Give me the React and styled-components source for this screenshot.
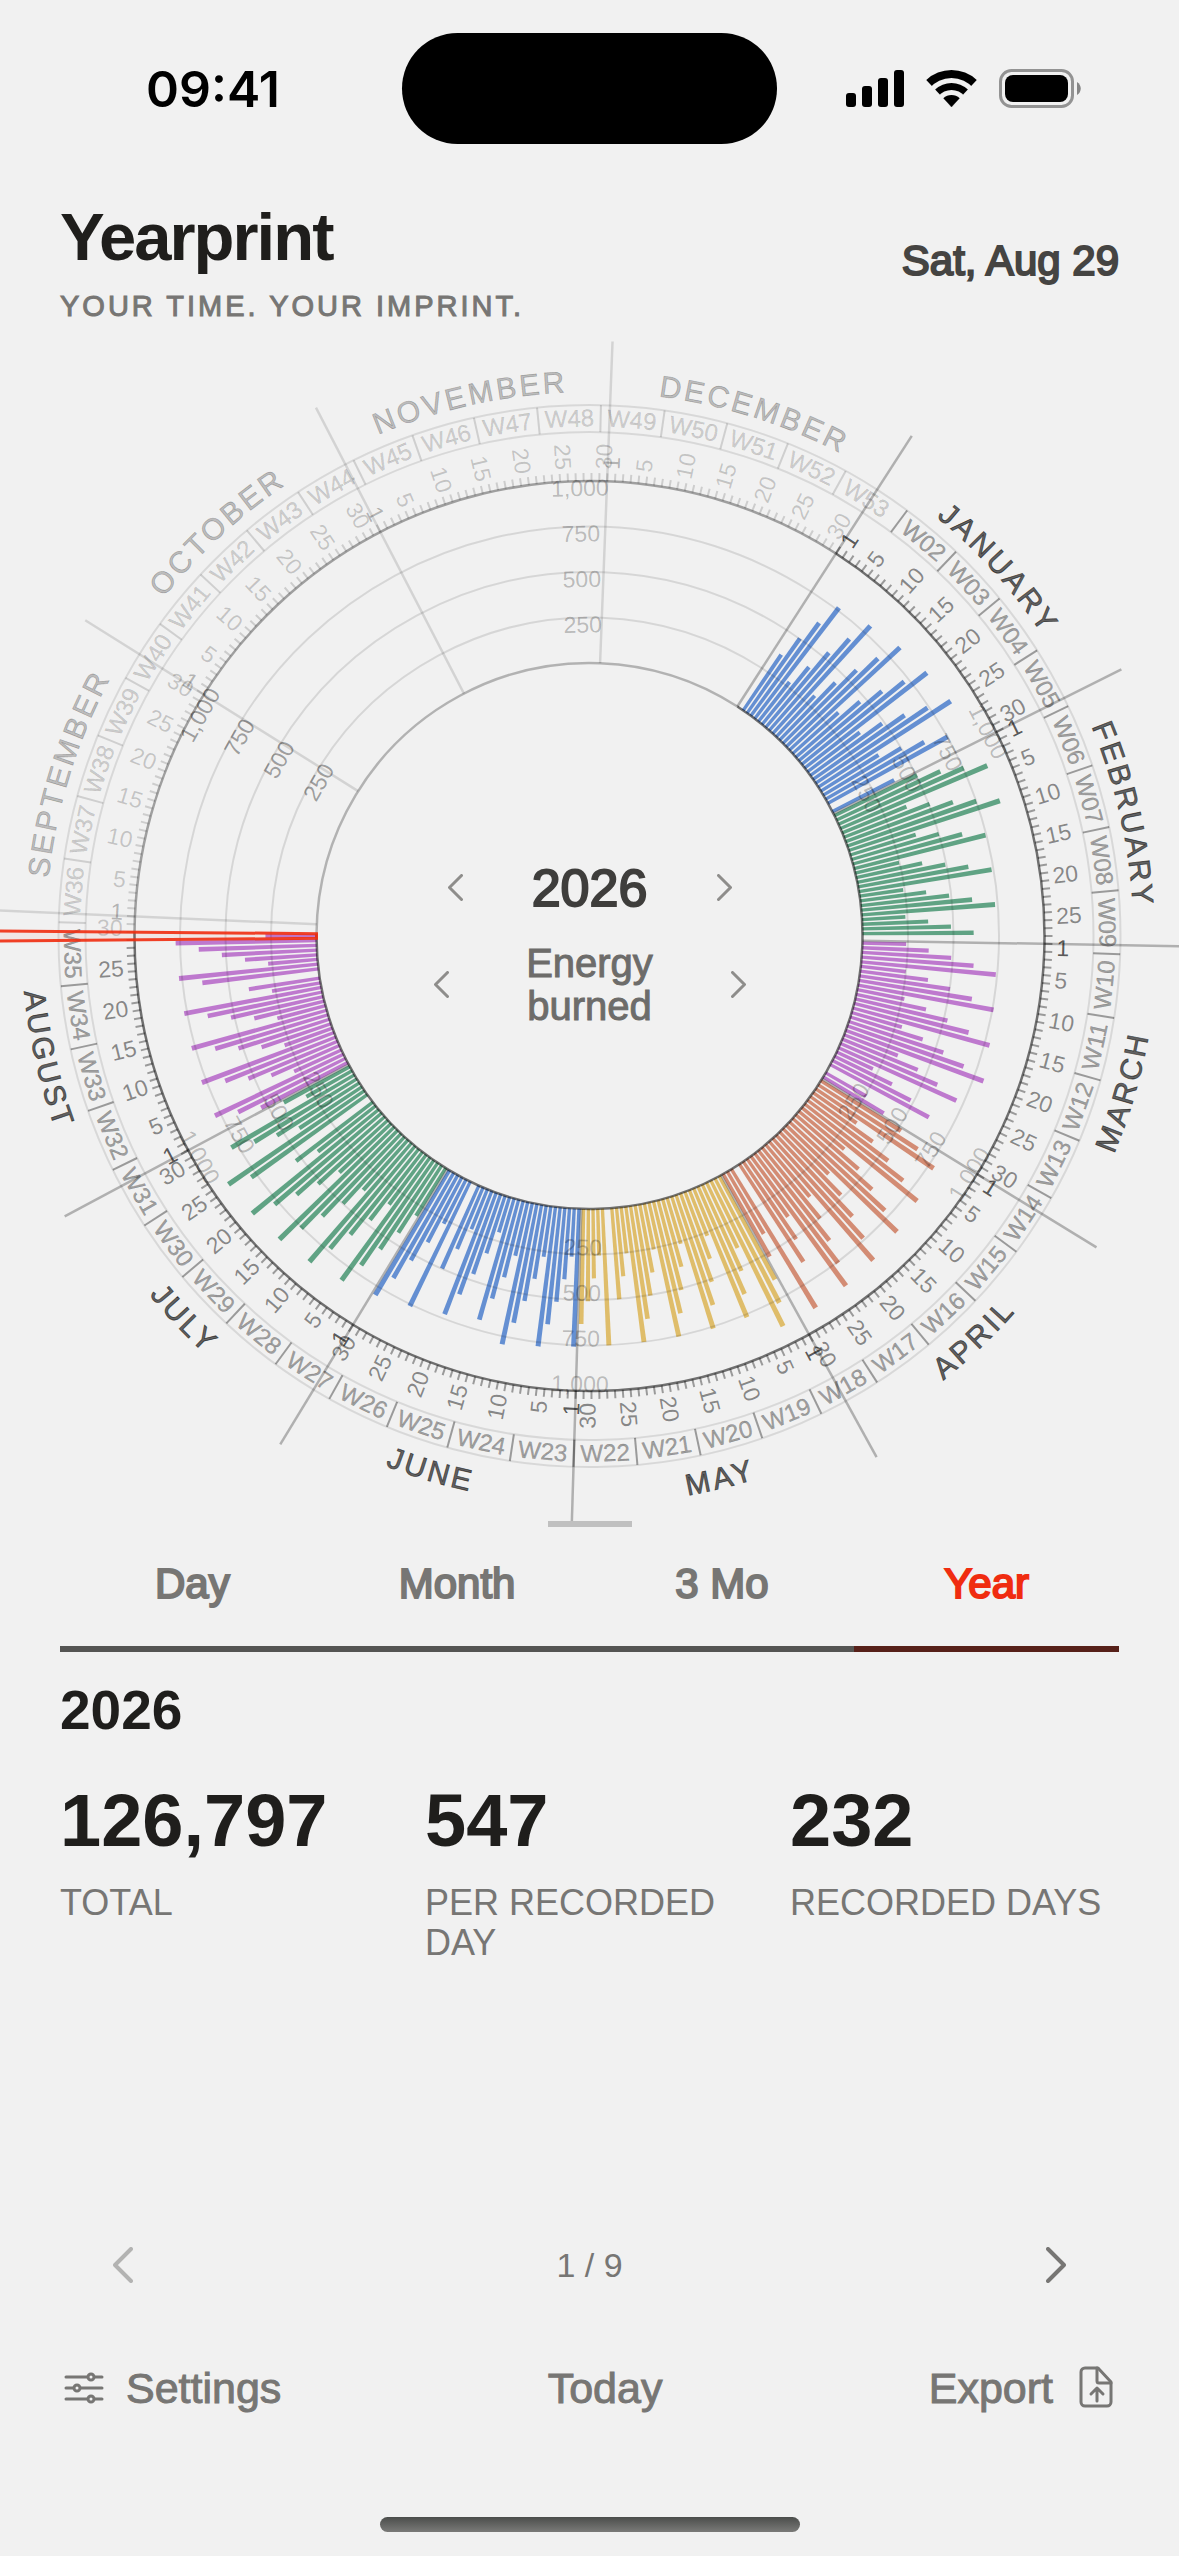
import { useState } from 'react'
import styled, { createGlobalStyle } from 'styled-components'

const colors = {
  background: '#f1f1f1',
  ink: '#1f1e1c',
  dark: '#454442',
  muted: '#777674',
  accent: '#f02c10',
}

const monthColors = ['#648fd2', '#60a384', '#be79ce', '#d38c74', '#dfbd6a']

const months = [
  { name: 'JANUARY', days: 31 },
  { name: 'FEBRUARY', days: 28 },
  { name: 'MARCH', days: 31 },
  { name: 'APRIL', days: 30 },
  { name: 'MAY', days: 31 },
  { name: 'JUNE', days: 30 },
  { name: 'JULY', days: 31 },
  { name: 'AUGUST', days: 31 },
  { name: 'SEPTEMBER', days: 30 },
  { name: 'OCTOBER', days: 31 },
  { name: 'NOVEMBER', days: 30 },
  { name: 'DECEMBER', days: 31 },
].map((month, index, all) => ({
  ...month,
  index,
  start: all.slice(0, index).reduce((sum, m) => sum + m.days, 0),
}))

const YEAR_DAYS = 365
const TODAY = 240
const FIRST_MONDAY = 4

// dial geometry
const CX = 589.5
const CY = 600
const R_INNER = 273
const R_OUTER = 455
const R_WEEK_IN = 504
const R_WEEK_OUT = 531
const R_SPOKE = 595
const STEP = 360 / YEAR_DAYS
// the dial is turned so that today points to the left
const START = 270 - (TODAY + 0.5) * STEP

const angleOf = (day) => START + day * STEP
const norm = (angle) => ((angle % 360) + 360) % 360
const isLower = (angle) => norm(angle) > 90 && norm(angle) < 270

function polar(r, angle, cx = CX, cy = CY) {
  const rad = (angle * Math.PI) / 180
  return [
    (cx + r * Math.sin(rad)).toFixed(2),
    (cy - r * Math.cos(rad)).toFixed(2),
  ]
}

function arc(r, a0, a1) {
  const sweep = a1 > a0 ? 1 : 0
  const large = Math.abs(a1 - a0) > 180 ? 1 : 0
  return `M${polar(r, a0)} A${r} ${r} 0 ${large} ${sweep} ${polar(r, a1)}`
}

function wedge(r0, r1, a0, a1, cx, cy) {
  return `M${polar(r0, a0, cx, cy)} L${polar(r1, a0, cx, cy)} A${r1} ${r1} 0 0 1 ${polar(r1, a1, cx, cy)} L${polar(r0, a1, cx, cy)} Z`
}

function ray(r0, r1, angle) {
  return `M${polar(r0, angle)} L${polar(r1, angle)}`
}

// every 29th day has no record
const records = []
for (let day = 0; day <= TODAY; day++) {
  if (day % 29 === 0) continue
  records.push({
    day,
    value: 240 + ((day * 127) % 620) + 60 * Math.sin(day / 14),
  })
}

const radiusOf = (value) => R_INNER + (value / 1000) * (R_OUTER - R_INNER)
const monthOf = (day) =>
  months.find((m) => day >= m.start && day < m.start + m.days)

const GlobalStyle = createGlobalStyle`
  * {
    box-sizing: border-box;
  }
  body {
    margin: 0;
    background: ${colors.background};
    color: ${colors.ink};
    font-family: "Liberation Sans", Arial, sans-serif;
    overflow-x: hidden;
  }
  button {
    padding: 0;
    border: 0;
    background: none;
    color: inherit;
    font: inherit;
    cursor: pointer;
  }
`

const Page = styled.div`
  display: flex;
  flex-direction: column;
  min-height: 100vh;
  overflow: hidden;
`

const StatusBar = styled.div`
  display: grid;
  grid-template-columns: 1fr auto 1fr;
  align-items: center;
  justify-items: center;
  padding-top: 33px;
  color: #000;
`
const Clock = styled.time`
  padding-left: 24px;
  font-family: Inter, sans-serif;
  font-size: 50px;
  font-weight: 600;
`
const Island = styled.div`
  width: 375px;
  height: 111px;
  border-radius: 56px;
  background: #000;
`
const StatusIcons = styled.svg`
  width: 236px;
  height: 40px;
  margin-right: 30px;
`

const Header = styled.header`
  display: flex;
  align-items: center;
  justify-content: space-between;
  margin-top: 57px;
  padding: 0 60px;
`
const Title = styled.h1`
  margin: 0 0 15px;
  font-size: 67px;
  line-height: 72px;
  letter-spacing: -2px;
`
const Tagline = styled.p`
  margin: 0;
  font-size: 29px;
  line-height: 36px;
  letter-spacing: 3px;
  color: ${colors.muted};
  -webkit-text-stroke: 1px;
`
const Today = styled.time`
  padding-bottom: 4px;
  font-size: 42px;
  line-height: 48px;
  color: ${colors.dark};
  -webkit-text-stroke: 2px;
`

const DialArea = styled.section`
  display: grid;
  margin-top: 12px;
`
const DialSvg = styled.svg`
  grid-area: 1 / 1;
  display: block;
  width: 100%;
  overflow: visible;
`
const Line = styled.path`
  fill: none;
  stroke: #000;
  stroke-width: ${({ $width }) => $width || 2};
  stroke-opacity: ${({ $alpha }) => $alpha};
`
const TodayWedge = styled.path`
  fill: ${colors.accent};
  fill-opacity: 0.05;
  stroke: ${colors.accent};
  stroke-opacity: 0.9;
  stroke-width: 3;
`
const DialText = styled.text`
  font-size: 23px;
  fill: #000;
  fill-opacity: ${({ $alpha }) => $alpha};
`
const WeekText = styled(DialText)`
  font-size: 24px;
  text-anchor: middle;
  stroke: #000;
  stroke-width: 0.4;
  stroke-opacity: ${({ $alpha }) => $alpha};
`
const MonthText = styled(DialText)`
  font-size: 30px;
  letter-spacing: 3px;
  text-anchor: middle;
  stroke: #000;
  stroke-width: 0.8;
  stroke-opacity: ${({ $alpha }) => $alpha};
`

const Controls = styled.div`
  grid-area: 1 / 1;
  place-self: center;
  z-index: 1;
  display: flex;
  flex-direction: column;
  align-items: center;
  gap: 26px;
  padding-top: 30px;
`
const Picker = styled.div`
  display: flex;
  align-items: center;
  justify-content: space-between;
  width: ${({ $wide }) => ($wide ? 312 : 284)}px;
  color: #8e8d8b;
`
const PickerYear = styled.span`
  font-size: 52px;
  line-height: 56px;
  color: #3f3e3c;
  -webkit-text-stroke: 2px;
`
const PickerMetric = styled.span`
  width: 140px;
  font-size: 40px;
  line-height: 43px;
  text-align: center;
  color: #6d6c6a;
  -webkit-text-stroke: 1px;
`

const ChevronSvg = styled.svg`
  display: block;
  fill: none;
  stroke: currentColor;
  stroke-width: 4;
  stroke-linecap: round;
  stroke-linejoin: round;
`

const Handle = styled.div`
  position: relative;
  align-self: center;
  width: 84px;
  height: 6px;
  background: #c0c0c0;
`
const Tabs = styled.div`
  position: relative;
  display: grid;
  grid-template-columns: repeat(4, 1fr);
  margin: 0 60px;
  background: ${colors.background};
`
const Tab = styled.button`
  height: 125px;
  padding-bottom: 6px;
  border-bottom: 6px solid ${({ $active }) => ($active ? '#57211a' : '#555553')};
  font-size: 42px;
  color: ${({ $active }) => ($active ? colors.accent : colors.muted)};
  -webkit-text-stroke: 2px;
`

const Summary = styled.section`
  padding: 28px 60px 0;
`
const SummaryTitle = styled.h2`
  margin: 0 0 41px;
  font-size: 55px;
  line-height: 60px;
`
const Stats = styled.dl`
  display: grid;
  grid-template-columns: repeat(3, 1fr);
  gap: 36px;
  margin: 0;
`
const Stat = styled.div`
  display: flex;
  flex-direction: column-reverse;
  justify-content: flex-end;
  gap: 22px;
`
const StatValue = styled.dd`
  margin: 0;
  font-size: 74px;
  font-weight: 700;
  line-height: 80px;
`
const StatLabel = styled.dt`
  font-size: 36px;
  line-height: 40px;
  color: ${colors.muted};
`

const Bottom = styled.div`
  display: flex;
  flex-direction: column;
  margin-top: auto;
  padding-bottom: 24px;
  color: ${colors.muted};
`
const Pager = styled.nav`
  display: flex;
  align-items: center;
  justify-content: space-between;
  height: 60px;
  margin-bottom: 63px;
  padding: 0 93px;
  font-size: 34px;
`
const PagerButton = styled.button`
  display: grid;
  place-items: center;
  width: 60px;
  height: 60px;
  &:disabled {
    color: #b3b3b2;
    cursor: default;
  }
`
const Footer = styled.footer`
  display: flex;
  align-items: center;
  justify-content: space-between;
  margin-bottom: 99px;
  padding: 0 60px;
`
const FooterButton = styled.button`
  display: flex;
  align-items: center;
  gap: 20px;
  height: 60px;
  font-size: 43px;
  -webkit-text-stroke: 1px;
`
const FooterIcon = styled.svg`
  width: 46px;
  height: 46px;
  fill: none;
  stroke: currentColor;
  stroke-width: 3;
  stroke-linecap: round;
  stroke-linejoin: round;
`
const HomeIndicator = styled.div`
  align-self: center;
  width: 420px;
  height: 15px;
  border-radius: 8px;
  background: linear-gradient(#4b4d4b, #7a7a78);
`

function Chevron({ right, size = 36 }) {
  return (
    <ChevronSvg
      width={(size * 20) / 36}
      height={size}
      viewBox="0 0 20 36"
      aria-hidden="true"
    >
      <path d={right ? 'M2 2 18 18 2 34' : 'M18 2 2 18 18 34'} />
    </ChevronSvg>
  )
}

function Rings() {
  const end = angleOf(TODAY + 1)
  const full = angleOf(YEAR_DAYS)
  return (
    <g>
      {[250, 500, 750].map((value) => (
        <g key={value}>
          <Line d={arc(radiusOf(value), START, end)} $alpha={0.11} />
          <Line d={arc(radiusOf(value), end, full)} $alpha={0.11} />
        </g>
      ))}
      {[R_WEEK_IN, R_WEEK_OUT].map((r) => (
        <g key={r}>
          <Line d={arc(r, START, end)} $alpha={0.1} />
          <Line d={arc(r, end, full)} $alpha={0.1} />
        </g>
      ))}
      {[R_INNER, R_OUTER].map((r) => (
        <g key={r}>
          <Line d={arc(r, START, end)} $alpha={0.54} $width={2.5} />
          <Line
            d={arc(r, end, full)}
            $alpha={r === R_INNER ? 0.26 : 0.34}
            $width={2.5}
          />
        </g>
      ))}
    </g>
  )
}

function Bars() {
  return (
    <g>
      {records.map(({ day, value }) => (
        <path
          key={day}
          d={wedge(
            R_INNER,
            radiusOf(value),
            angleOf(day + 0.15),
            angleOf(day + 0.85)
          )}
          fill={monthColors[monthOf(day).index % 5]}
        />
      ))}
    </g>
  )
}

function DayScale() {
  const ticks = (from, to) => {
    let d = ''
    for (let day = from; day < to; day++) {
      d += ray(R_OUTER, R_OUTER + 8, angleOf(day))
    }
    return d
  }
  return (
    <g>
      <Line d={ticks(0, TODAY + 1)} $alpha={0.36} />
      <Line d={ticks(TODAY + 1, YEAR_DAYS)} $alpha={0.15} />
      {months.map((month) =>
        [1, 5, 10, 15, 20, 25, 30]
          .filter((date) => date <= month.days)
          .map((date) => {
            const day = month.start + date - 1
            const angle = norm(angleOf(day + 0.5))
            const leftSide = angle > 180
            const [x, y] = polar(R_OUTER + 12, angle)
            const past = date === 1 ? 0.65 : 0.45
            const future = date === 1 ? 0.27 : 0.19
            return (
              <DialText
                key={day}
                $alpha={day > TODAY ? future : past}
                textAnchor={leftSide ? 'end' : 'start'}
                transform={`translate(${x} ${y}) rotate(${angle + (leftSide ? 90 : -90)})`}
                dy="8"
              >
                {date}
              </DialText>
            )
          })
      )}
    </g>
  )
}

function WeekRing() {
  const weeks = []
  for (let n = 2; n <= 53; n++) {
    const first = FIRST_MONDAY + (n - 2) * 7
    const angle = angleOf(first + 3.5)
    const [x, y] = polar((R_WEEK_IN + R_WEEK_OUT) / 2, angle)
    const future = first > TODAY
    weeks.push(
      <g key={n}>
        <Line
          d={ray(R_WEEK_IN, R_WEEK_OUT, angleOf(first))}
          $alpha={future ? 0.14 : 0.36}
        />
        <WeekText
          $alpha={future ? 0.16 : 0.34}
          transform={`translate(${x} ${y}) rotate(${isLower(angle) ? angle + 180 : angle})`}
          dy="8"
        >
          W{String(n).padStart(2, '0')}
        </WeekText>
      </g>
    )
  }
  return <g>{weeks}</g>
}

function Months() {
  return (
    <g>
      {months.map((month) => {
        const mid = angleOf(month.start + month.days / 2)
        const id = `arc-${month.name.toLowerCase()}`
        const future = month.start > TODAY
        const d = isLower(mid)
          ? arc(568, mid + 18, mid - 18)
          : arc(544, mid - 18, mid + 18)
        return (
          <g key={month.name}>
            <Line
              d={ray(R_INNER, R_SPOKE, angleOf(month.start))}
              $alpha={future ? 0.12 : 0.27}
              $width={2.5}
            />
            <path id={id} d={d} fill="none" />
            <MonthText $alpha={future ? 0.23 : 0.6}>
              <textPath href={`#${id}`} startOffset="50%">
                {month.name}
              </textPath>
            </MonthText>
          </g>
        )
      })}
    </g>
  )
}

function ScaleLabels() {
  return (
    <g>
      {[0, 1, 2, 3, 4, 5].map((n) => {
        const angle = angleOf(30.5 + n * 60)
        return [250, 500, 750, 1000].map((value) => {
          const [x, y] = polar(radiusOf(value) - 7, angle)
          return (
            <DialText
              key={`${n}-${value}`}
              $alpha={n === 4 ? 0.36 : 0.24}
              textAnchor="middle"
              transform={`translate(${x} ${y}) rotate(${isLower(angle) ? angle + 180 : angle})`}
              dy="8"
            >
              {value.toLocaleString('en-US')}
            </DialText>
          )
        })
      })}
    </g>
  )
}

function Dial() {
  return (
    <DialSvg viewBox="0 0 1179 1185" role="img" aria-label="Energy burned, 2026">
      <Bars />
      <Rings />
      <DayScale />
      <WeekRing />
      <Months />
      <ScaleLabels />
      <TodayWedge
        d={wedge(R_INNER, 640, angleOf(TODAY), angleOf(TODAY + 1))}
      />
    </DialSvg>
  )
}

function StatusGlyphs() {
  return (
    <StatusIcons viewBox="0 0 236 40" aria-hidden="true">
      <rect x="1" y="24" width="10" height="14" rx="3" />
      <rect x="17" y="17" width="10" height="21" rx="3" />
      <rect x="33" y="9" width="10" height="29" rx="3" />
      <rect x="49" y="1" width="10" height="37" rx="3" />
      <path d={wedge(0, 37, -43, 43, 106.5, 38)} />
      <path d={wedge(0, 29, -50, 50, 106.5, 38)} fill={colors.background} />
      <path d={wedge(0, 24, -43, 43, 106.5, 38)} />
      <path d={wedge(0, 17, -50, 50, 106.5, 38)} fill={colors.background} />
      <path d={wedge(0, 12, -43, 43, 106.5, 38)} />
      <rect
        x="155.5"
        y="1.5"
        width="72"
        height="36"
        rx="11"
        fill="none"
        stroke="#939393"
        strokeWidth="3"
      />
      <rect x="160" y="6" width="63" height="27" rx="8" />
      <path d="M232 13c5 3 5 10 0 13z" fill="#868686" />
    </StatusIcons>
  )
}

const ranges = ['Day', 'Month', '3 Mo', 'Year']

const stats = [
  { label: 'TOTAL', value: '126,797' },
  { label: 'PER RECORDED DAY', value: '547' },
  { label: 'RECORDED DAYS', value: '232' },
]

function App() {
  const [range, setRange] = useState('Year')

  return (
    <Page>
      <GlobalStyle />
      <StatusBar>
        <Clock>09:41</Clock>
        <Island />
        <StatusGlyphs />
      </StatusBar>

      <Header>
        <div>
          <Title>Yearprint</Title>
          <Tagline>YOUR TIME. YOUR IMPRINT.</Tagline>
        </div>
        <Today dateTime="2026-08-29">Sat, Aug 29</Today>
      </Header>

      <DialArea>
        <Dial />
        <Controls>
          <Picker>
            <button aria-label="Previous year">
              <Chevron size={27} />
            </button>
            <PickerYear>2026</PickerYear>
            <button aria-label="Next year">
              <Chevron size={27} right />
            </button>
          </Picker>
          <Picker $wide>
            <button aria-label="Previous metric">
              <Chevron size={27} />
            </button>
            <PickerMetric>Energy burned</PickerMetric>
            <button aria-label="Next metric">
              <Chevron size={27} right />
            </button>
          </Picker>
        </Controls>
      </DialArea>

      <Handle />
      <Tabs role="tablist">
        {ranges.map((name) => (
          <Tab
            key={name}
            role="tab"
            aria-selected={name === range}
            $active={name === range}
            onClick={() => setRange(name)}
          >
            {name}
          </Tab>
        ))}
      </Tabs>

      <Summary>
        <SummaryTitle>2026</SummaryTitle>
        <Stats>
          {stats.map((stat) => (
            <Stat key={stat.label}>
              <StatLabel>{stat.label}</StatLabel>
              <StatValue>{stat.value}</StatValue>
            </Stat>
          ))}
        </Stats>
      </Summary>

      <Bottom>
        <Pager aria-label="Summary pages">
          <PagerButton aria-label="Previous page" disabled>
            <Chevron />
          </PagerButton>
          <span>1 / 9</span>
          <PagerButton aria-label="Next page">
            <Chevron right />
          </PagerButton>
        </Pager>
        <Footer>
          <FooterButton>
            <FooterIcon viewBox="0 0 46 46" aria-hidden="true">
              <path d="M6 12h21M35 12h7M6 23h7M21 23h21M6 34h21M35 34h7" />
              <circle cx="31" cy="12" r="3" />
              <circle cx="17" cy="23" r="3" />
              <circle cx="31" cy="34" r="3" />
            </FooterIcon>
            Settings
          </FooterButton>
          <FooterButton>Today</FooterButton>
          <FooterButton>
            Export
            <FooterIcon viewBox="0 0 46 46" aria-hidden="true">
              <path d="M25 3H12a4 4 0 0 0-4 4v30a4 4 0 0 0 4 4h22a4 4 0 0 0 4-4V17z" />
              <path d="M24 3v13a2 2 0 0 0 2 2h12M24 36V23M18 29l6-6 6 6" />
            </FooterIcon>
          </FooterButton>
        </Footer>
        <HomeIndicator />
      </Bottom>
    </Page>
  )
}

export default App
